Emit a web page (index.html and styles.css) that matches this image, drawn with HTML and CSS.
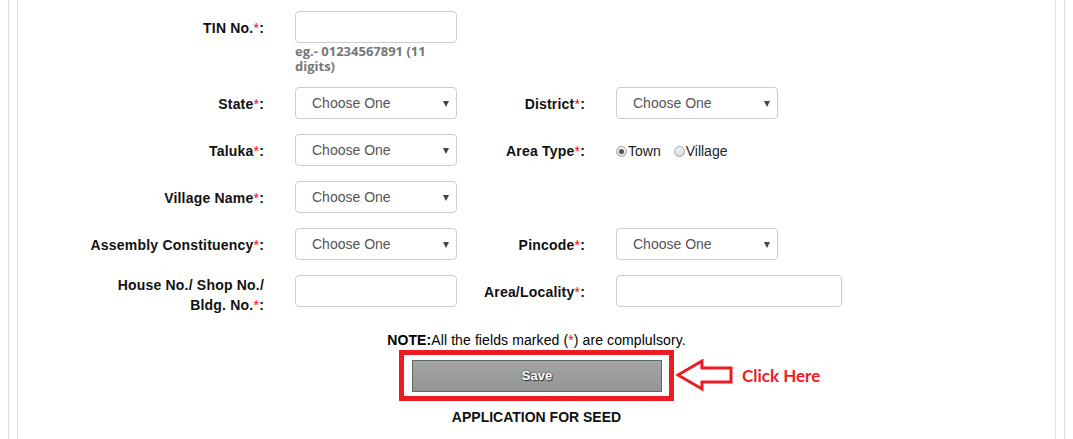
FILE: index.html
```html
<!DOCTYPE html>
<html>
<head>
<meta charset="utf-8">
<link rel="stylesheet" href="styles.css">
</head>
<body>
<div class="frame">
  <div class="inner">
    <div class="form">
      <div class="row row-tin">
        <div class="lbl">TIN No.<span class="req">*</span>:</div>
        <div class="cell">
          <div class="input"></div>
          <div class="hint">eg.- 01234567891 (11 digits)</div>
        </div>
      </div>
      <div class="row">
        <div class="lbl">State<span class="req">*</span>:</div>
        <div class="select">Choose One</div>
        <div class="lbl">District<span class="req">*</span>:</div>
        <div class="select">Choose One</div>
      </div>
      <div class="row">
        <div class="lbl">Taluka<span class="req">*</span>:</div>
        <div class="select">Choose One</div>
        <div class="lbl">Area Type<span class="req">*</span>:</div>
        <div class="radios">
          <span class="radio checked"></span><span class="rtext">Town</span>
          <span class="radio"></span><span class="rtext">Village</span>
        </div>
      </div>
      <div class="row">
        <div class="lbl">Village Name<span class="req">*</span>:</div>
        <div class="select">Choose One</div>
      </div>
      <div class="row">
        <div class="lbl">Assembly Constituency<span class="req">*</span>:</div>
        <div class="select">Choose One</div>
        <div class="lbl">Pincode<span class="req">*</span>:</div>
        <div class="select">Choose One</div>
      </div>
      <div class="row">
        <div class="lbl lbl-two">House No./ Shop No./<br>Bldg. No.<span class="req">*</span>:</div>
        <div class="input"></div>
        <div class="lbl">Area/Locality<span class="req">*</span>:</div>
        <div class="input wide"></div>
      </div>
    </div>
    <div class="note"><b>NOTE:</b>All the fields marked (<span class="req">*</span>) are complulsory.</div>
    <div class="save-row">
      <div class="highlight">
        <div class="save">Save</div>
      </div>
      <div class="callout">
        <svg class="arrow" width="60" height="34" viewBox="0 0 60 34">
          <polygon points="2,16 26,2 26,9 55,9 55,23 26,23 26,30" fill="none" stroke="#ed1c24" stroke-width="3" stroke-linejoin="miter"/>
        </svg>
        <span class="click">Click Here</span>
      </div>
    </div>
    <div class="app-title">APPLICATION FOR SEED</div>
  </div>
</div>
</body>
</html>
```
FILE: styles.css
```css
html, body {
  margin: 0;
  padding: 0;
  background: #fff;
}
body {
  margin: 0 8px;
  font-family: "Liberation Sans", Arial, sans-serif;
  font-size: 14px;
  color: #111;
}
.frame {
  height: 439px;
  border-left: 1px solid #dcdcdc;
  border-right: 1px solid #dcdcdc;
  padding: 0 8px;
  box-sizing: border-box;
}
.inner {
  height: 100%;
  border-left: 1px solid #e2e2e2;
  border-right: 1px solid #e2e2e2;
  padding-top: 11px;
  box-sizing: border-box;
}
.row {
  display: grid;
  grid-template-columns: 277px 162px 159px 1fr;
  align-items: start;
  margin-bottom: 15px;
}
.row-tin {
  margin-bottom: 13px;
}
.lbl {
  text-align: right;
  padding-right: 31px;
  padding-top: 1px;
  line-height: 32px;
  height: 32px;
  box-sizing: border-box;
  font-weight: bold;
  font-size: 14px;
  letter-spacing: 0.2px;
  color: #111;
  white-space: nowrap;
}
.lbl-two {
  line-height: 20px;
  height: auto;
  padding-top: 0;
}
.req {
  color: #f00;
  font-weight: normal;
}
.input {
  width: 162px;
  height: 32px;
  border: 1px solid #ccc;
  border-radius: 4px;
  box-sizing: border-box;
  background: #fff;
}
.input.wide {
  width: 226px;
}
.hint {
  margin-top: 1px;
  font-family: "Open Sans", sans-serif;
  font-weight: bold;
  font-size: 13px;
  line-height: 15px;
  color: #777;
}
.select {
  position: relative;
  width: 162px;
  height: 32px;
  border: 1px solid #ccc;
  border-radius: 4px;
  box-sizing: border-box;
  padding-left: 16px;
  line-height: 30px;
  font-size: 14px;
  color: #555;
}
.select::after {
  content: "";
  position: absolute;
  right: 7px;
  top: 13px;
  border-left: 3px solid transparent;
  border-right: 3px solid transparent;
  border-top: 6px solid #444;
}
.radios {
  display: flex;
  align-items: center;
  height: 32px;
  padding-top: 2px;
  box-sizing: border-box;
  font-size: 14px;
  color: #222;
}
.radio {
  width: 9px;
  height: 9px;
  border: 1px solid #a3a3a3;
  border-radius: 50%;
  background: linear-gradient(#f2f2f2, #dcdcdc);
  position: relative;
  margin-right: 1px;
}
.radio.checked::after {
  content: "";
  position: absolute;
  left: 2px;
  top: 2px;
  width: 5px;
  height: 5px;
  border-radius: 50%;
  background: #555;
}
.rtext {
  margin-right: 13px;
}
.note {
  text-align: center;
  line-height: 20px;
  font-size: 14px;
  letter-spacing: 0.1px;
  color: #000;
}
.save-row {
  position: relative;
  display: flex;
  justify-content: center;
}
.highlight {
  border: 5px solid #ed1c24;
  padding: 5px 7px 4px 8px;
}
.save {
  width: 250px;
  height: 32px;
  box-sizing: border-box;
  border: 1px solid #5b6a62;
  background: linear-gradient(#a2a5a3, #939694);
  color: #fff;
  font-weight: bold;
  font-size: 13px;
  line-height: 30px;
  text-align: center;
  text-shadow: 0 0 2px #333, 1px 1px 1px #333;
}
.callout {
  position: absolute;
  left: 658px;
  top: 9px;
  display: flex;
  align-items: center;
}
.arrow {
  display: block;
}
.click {
  margin-left: 6px;
  font-family: Lato, sans-serif;
  font-weight: bold;
  font-size: 17px;
  color: #ed1c24;
  margin-top: -2px;
}
.app-title {
  margin-top: 6px;
  text-align: center;
  line-height: 20px;
  font-weight: bold;
  font-size: 14px;
  color: #111;
}
```
